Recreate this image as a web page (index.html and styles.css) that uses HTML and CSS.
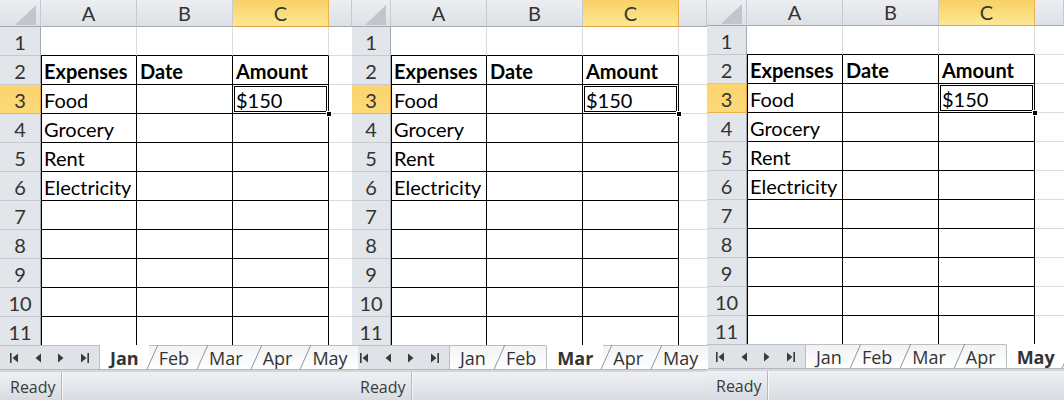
FILE: index.html
```html
<!DOCTYPE html>
<html lang="en">
<head>
  <meta charset="UTF-8" />
  <title>Expenses workbook</title>
  <link rel="stylesheet" href="styles.css">
</head>
<body>
  <div class="screen">

    <!-- Sheet: Jan -->
    <div class="sheet sheet-jan">
      <div class="grid">
        <div class="corner"></div>
        <div class="colhead">A</div>
        <div class="colhead">B</div>
        <div class="colhead active">C</div>
        <div class="colhead"></div>

        <div class="rowhead">1</div>
        <div class="cell top"></div><div class="cell top"></div><div class="cell top"></div><div class="cell extra"></div>
        <div class="rowhead">2</div>
        <div class="cell box first bold">Expenses</div><div class="cell box bold">Date</div><div class="cell box bold">Amount</div><div class="cell extra"></div>
        <div class="rowhead active">3</div>
        <div class="cell box first">Food</div><div class="cell box"></div><div class="cell box sel">$150</div><div class="cell extra"></div>
        <div class="rowhead">4</div>
        <div class="cell box first">Grocery</div><div class="cell box"></div><div class="cell box"></div><div class="cell extra"></div>
        <div class="rowhead">5</div>
        <div class="cell box first">Rent</div><div class="cell box"></div><div class="cell box"></div><div class="cell extra"></div>
        <div class="rowhead">6</div>
        <div class="cell box first">Electricity</div><div class="cell box"></div><div class="cell box"></div><div class="cell extra"></div>
        <div class="rowhead">7</div>
        <div class="cell box first"></div><div class="cell box"></div><div class="cell box"></div><div class="cell extra"></div>
        <div class="rowhead">8</div>
        <div class="cell box first"></div><div class="cell box"></div><div class="cell box"></div><div class="cell extra"></div>
        <div class="rowhead">9</div>
        <div class="cell box first"></div><div class="cell box"></div><div class="cell box"></div><div class="cell extra"></div>
        <div class="rowhead">10</div>
        <div class="cell box first"></div><div class="cell box"></div><div class="cell box"></div><div class="cell extra"></div>
        <div class="rowhead">11</div>
        <div class="cell box first"></div><div class="cell box"></div><div class="cell box"></div><div class="cell extra"></div>
      </div>

      <div class="tabbar">
        <div class="nav">
          <svg class="ico" width="8" height="10" viewBox="0 0 8 10"><rect x="0" y="0" width="1.6" height="10"/><path d="M8 0.5 L2.5 5 L8 9.5Z"/></svg>
          <svg class="ico" width="6" height="10" viewBox="0 0 6 10"><path d="M6 0.5 L0.5 5 L6 9.5Z"/></svg>
          <svg class="ico" width="6" height="10" viewBox="0 0 6 10"><path d="M0 0.5 L5.5 5 L0 9.5Z"/></svg>
          <svg class="ico" width="8" height="10" viewBox="0 0 8 10"><path d="M0 0.5 L5.5 5 L0 9.5Z"/><rect x="6.4" y="0" width="1.6" height="10"/></svg>
        </div>
        <span class="tab on first">Jan</span>
        <span class="tab">Feb</span>
        <span class="tab">Mar</span>
        <span class="tab">Apr</span>
        <span class="tab">May</span>
      </div>
      <div class="status"><span class="ready">Ready</span></div>
    </div>

    <!-- Sheet: Mar -->
    <div class="sheet sheet-mar">
      <div class="grid">
        <div class="corner"></div>
        <div class="colhead">A</div>
        <div class="colhead">B</div>
        <div class="colhead active">C</div>
        <div class="colhead"></div>

        <div class="rowhead">1</div>
        <div class="cell top"></div><div class="cell top"></div><div class="cell top"></div><div class="cell extra"></div>
        <div class="rowhead">2</div>
        <div class="cell box first bold">Expenses</div><div class="cell box bold">Date</div><div class="cell box bold">Amount</div><div class="cell extra"></div>
        <div class="rowhead active">3</div>
        <div class="cell box first">Food</div><div class="cell box"></div><div class="cell box sel">$150</div><div class="cell extra"></div>
        <div class="rowhead">4</div>
        <div class="cell box first">Grocery</div><div class="cell box"></div><div class="cell box"></div><div class="cell extra"></div>
        <div class="rowhead">5</div>
        <div class="cell box first">Rent</div><div class="cell box"></div><div class="cell box"></div><div class="cell extra"></div>
        <div class="rowhead">6</div>
        <div class="cell box first">Electricity</div><div class="cell box"></div><div class="cell box"></div><div class="cell extra"></div>
        <div class="rowhead">7</div>
        <div class="cell box first"></div><div class="cell box"></div><div class="cell box"></div><div class="cell extra"></div>
        <div class="rowhead">8</div>
        <div class="cell box first"></div><div class="cell box"></div><div class="cell box"></div><div class="cell extra"></div>
        <div class="rowhead">9</div>
        <div class="cell box first"></div><div class="cell box"></div><div class="cell box"></div><div class="cell extra"></div>
        <div class="rowhead">10</div>
        <div class="cell box first"></div><div class="cell box"></div><div class="cell box"></div><div class="cell extra"></div>
        <div class="rowhead">11</div>
        <div class="cell box first"></div><div class="cell box"></div><div class="cell box"></div><div class="cell extra"></div>
      </div>

      <div class="tabbar">
        <div class="nav">
          <svg class="ico" width="8" height="10" viewBox="0 0 8 10"><rect x="0" y="0" width="1.6" height="10"/><path d="M8 0.5 L2.5 5 L8 9.5Z"/></svg>
          <svg class="ico" width="6" height="10" viewBox="0 0 6 10"><path d="M6 0.5 L0.5 5 L6 9.5Z"/></svg>
          <svg class="ico" width="6" height="10" viewBox="0 0 6 10"><path d="M0 0.5 L5.5 5 L0 9.5Z"/></svg>
          <svg class="ico" width="8" height="10" viewBox="0 0 8 10"><path d="M0 0.5 L5.5 5 L0 9.5Z"/><rect x="6.4" y="0" width="1.6" height="10"/></svg>
        </div>
        <span class="tab first">Jan</span>
        <span class="tab">Feb</span>
        <span class="tab on">Mar</span>
        <span class="tab">Apr</span>
        <span class="tab">May</span>
      </div>
      <div class="status"><span class="ready">Ready</span></div>
    </div>

    <!-- Sheet: May -->
    <div class="sheet sheet-may">
      <div class="grid">
        <div class="corner"></div>
        <div class="colhead">A</div>
        <div class="colhead">B</div>
        <div class="colhead active">C</div>
        <div class="colhead"></div>

        <div class="rowhead">1</div>
        <div class="cell top"></div><div class="cell top"></div><div class="cell top"></div><div class="cell extra"></div>
        <div class="rowhead">2</div>
        <div class="cell box first bold">Expenses</div><div class="cell box bold">Date</div><div class="cell box bold">Amount</div><div class="cell extra"></div>
        <div class="rowhead active">3</div>
        <div class="cell box first">Food</div><div class="cell box"></div><div class="cell box sel">$150</div><div class="cell extra"></div>
        <div class="rowhead">4</div>
        <div class="cell box first">Grocery</div><div class="cell box"></div><div class="cell box"></div><div class="cell extra"></div>
        <div class="rowhead">5</div>
        <div class="cell box first">Rent</div><div class="cell box"></div><div class="cell box"></div><div class="cell extra"></div>
        <div class="rowhead">6</div>
        <div class="cell box first">Electricity</div><div class="cell box"></div><div class="cell box"></div><div class="cell extra"></div>
        <div class="rowhead">7</div>
        <div class="cell box first"></div><div class="cell box"></div><div class="cell box"></div><div class="cell extra"></div>
        <div class="rowhead">8</div>
        <div class="cell box first"></div><div class="cell box"></div><div class="cell box"></div><div class="cell extra"></div>
        <div class="rowhead">9</div>
        <div class="cell box first"></div><div class="cell box"></div><div class="cell box"></div><div class="cell extra"></div>
        <div class="rowhead">10</div>
        <div class="cell box first"></div><div class="cell box"></div><div class="cell box"></div><div class="cell extra"></div>
        <div class="rowhead">11</div>
        <div class="cell box first"></div><div class="cell box"></div><div class="cell box"></div><div class="cell extra"></div>
      </div>

      <div class="tabbar">
        <div class="nav">
          <svg class="ico" width="8" height="10" viewBox="0 0 8 10"><rect x="0" y="0" width="1.6" height="10"/><path d="M8 0.5 L2.5 5 L8 9.5Z"/></svg>
          <svg class="ico" width="6" height="10" viewBox="0 0 6 10"><path d="M6 0.5 L0.5 5 L6 9.5Z"/></svg>
          <svg class="ico" width="6" height="10" viewBox="0 0 6 10"><path d="M0 0.5 L5.5 5 L0 9.5Z"/></svg>
          <svg class="ico" width="8" height="10" viewBox="0 0 8 10"><path d="M0 0.5 L5.5 5 L0 9.5Z"/><rect x="6.4" y="0" width="1.6" height="10"/></svg>
        </div>
        <span class="tab first">Jan</span>
        <span class="tab">Feb</span>
        <span class="tab">Mar</span>
        <span class="tab">Apr</span>
        <span class="tab on last">May</span>
      </div>
      <div class="status"><span class="ready">Ready</span></div>
    </div>

  </div>
</body>
</html>
```

FILE: styles.css
```css
body {
  margin: 0;
  background: #fff;
  overflow: hidden;
  font-family: Lato, "Liberation Sans", sans-serif;
}

.screen {
  display: flex;
  width: 1064px;
  height: 400px;
}

.sheet {
  display: flex;
  flex-direction: column;
  flex: none;
  width: var(--w);
  height: 400px;
}

.sheet-jan { --w: 352px; --rh: 41px; --nav: 100px; --head: 27px; }
.sheet-mar { --w: 355px; --rh: 39px; --nav: 98px; --head: 27px; }
.sheet-may { --w: 357px; --rh: 40px; --nav: 99px; --head: 26px; }

/* grid */

.grid {
  display: grid;
  grid-template-columns: var(--rh) 96px 96px 96px 1fr;
  grid-template-rows: var(--head) repeat(11, 29px);
  height: calc(var(--head) + 318px);
  overflow: hidden;
  font-size: 20px;
  flex: none;
}

.grid > div {
  box-sizing: border-box;
}

.corner,
.colhead {
  background: linear-gradient(#eceef2, #dde1e6);
  border-right: 1px solid #c6cad0;
  border-bottom: 1px solid #a4a9b0;
}

.corner {
  position: relative;
}

.corner::after {
  content: "";
  position: absolute;
  right: 4px;
  bottom: 1px;
  border-left: 21px solid transparent;
  border-bottom: 20px solid #c2c6cc;
}

.colhead {
  text-align: center;
  line-height: calc(var(--head) - 1px);
  color: #333;
}

.colhead.active {
  background: linear-gradient(#f8d067, #fde893);
  border-right-color: #eeb24c;
  border-bottom-color: #e3a23a;
}

.rowhead {
  background: #e2e5e9;
  border-right: 1px solid #a4a9b0;
  border-bottom: 1px solid #c6cad0;
  text-align: center;
  padding-top: 1px;
  line-height: 28px;
  color: #333;
}

.rowhead.active {
  background: linear-gradient(#fbd46d, #fcd978);
  border-right-color: #e3a23a;
  border-bottom-color: #eeb24c;
}

.cell {
  border-right: 1px solid #dadcdf;
  border-bottom: 1px solid #dadcdf;
  padding: 1px 3px 0;
  line-height: 28px;
  white-space: nowrap;
  color: #000;
}

.cell.top {
  border-bottom-color: #000;
}

.cell.box {
  border-right-color: #000;
  border-bottom-color: #000;
}

.cell.first {
  border-left: 1px solid #000;
  padding-left: 2px;
}

.cell.extra {
  border-right: none;
}

.bold {
  font-weight: bold;
}

.sel {
  position: relative;
  box-shadow: inset 0 0 0 1px #fff, inset 0 0 0 2px #000;
}

.sel::after {
  content: "";
  position: absolute;
  right: -4px;
  bottom: -4px;
  width: 4px;
  height: 4px;
  background: #000;
  border: 1px solid #fff;
  z-index: 2;
}

/* sheet tabs */

.tabbar {
  display: flex;
  height: 25px;
  box-sizing: border-box;
  border-bottom: 1px solid #b4b9c0;
  font-family: "Open Sans", sans-serif;
  font-size: 18px;
  color: #333;
  background: #fff;
  flex: none;
}

.nav {
  width: var(--nav);
  flex: none;
  box-sizing: border-box;
  display: flex;
  align-items: center;
  gap: 17px;
  padding-left: calc(var(--rh) - 31px);
  background: #dfe3e8;
  border-top: 1px solid #b9bec5;
  border-right: 1px solid #b9bec5;
}

.ico {
  fill: #3a3a3a;
}

.tab {
  position: relative;
  padding: 0 10px;
  line-height: 24px;
  border-top: 1px solid #b9bec5;
  background: linear-gradient(#f1f3f5, #fff);
}

.tab::before {
  content: "";
  position: absolute;
  left: 3px;
  top: -1px;
  bottom: 0;
  border-left: 1px solid #8f959d;
  transform: skewX(-24deg);
}

.tab.first::before,
.tab.on::before {
  display: none;
}

.tab.on {
  font-weight: bold;
  background: #fff;
  border-top-color: #fff;
  border-left: 1px solid #b9bec5;
}

.tab.on.first {
  border-left: none;
}

.tab.last::after {
  content: "";
  position: absolute;
  right: -3px;
  top: -1px;
  bottom: 0;
  border-left: 1px solid #8f959d;
  transform: skewX(-24deg);
}

/* status bar */

.status {
  flex: 1;
  display: flex;
  border-top: 2px solid #d3d7dc;
  background: linear-gradient(#eef0f3, #d8dce1);
  font-family: "Open Sans", sans-serif;
  font-size: 16px;
  color: #3a3a3a;
}

.ready {
  box-sizing: border-box;
  width: calc(var(--rh) + 21px);
  padding: 2px 0 0 calc(var(--rh) - 31px);
  line-height: 26px;
  border-right: 1px solid #b4b9c0;
  box-shadow: 1px 0 0 #f7f8fa;
}
```
